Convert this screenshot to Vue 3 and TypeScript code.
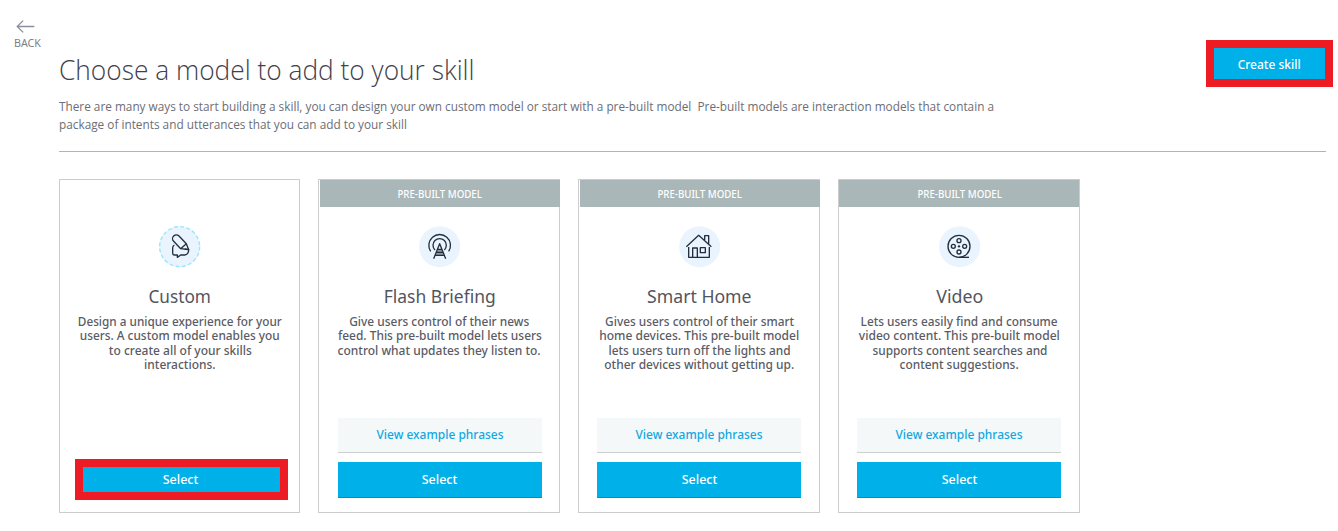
<script setup lang="ts">
import type { Directive } from 'vue'

interface Line {
  text: string
  width: number
}

interface Model {
  id: 'custom' | 'flash' | 'home' | 'video'
  title: Line
  lines: Line[]
  prebuilt: boolean
}

// Condenses a line of text so that it takes the given width.
const vFit: Directive<HTMLElement, number> = {
  mounted(el, binding) {
    const natural = el.getBoundingClientRect().width
    if (natural === 0) return
    el.style.transform = `scaleX(${(binding.value / natural).toFixed(5)})`
  },
}

const intro: Line[] = [
  {
    text: 'There are many ways to start building a skill, you can design your own custom model or start with a pre-built model\u00a0 Pre-built models are interaction models that contain a',
    width: 935,
  },
  { text: 'package of intents and utterances that you can add to your skill', width: 348 },
]

const models: Model[] = [
  {
    id: 'custom',
    title: { text: 'Custom', width: 62.5 },
    lines: [
      { text: 'Design a unique experience for your', width: 204 },
      { text: 'users. A custom model enables you', width: 200 },
      { text: 'to create all of your skills', width: 143 },
      { text: 'interactions.', width: 71.5 },
    ],
    prebuilt: false,
  },
  {
    id: 'flash',
    title: { text: 'Flash Briefing', width: 112 },
    lines: [
      { text: 'Give users control of their news', width: 180 },
      { text: 'feed. This pre-built model lets users', width: 204 },
      { text: 'control what updates they listen to.', width: 203 },
    ],
    prebuilt: true,
  },
  {
    id: 'home',
    title: { text: 'Smart Home', width: 104.5 },
    lines: [
      { text: 'Gives users control of their smart', width: 189 },
      { text: 'home devices. This pre-built model', width: 200 },
      { text: 'lets users turn off the lights and', width: 182 },
      { text: 'other devices without getting up.', width: 190 },
    ],
    prebuilt: true,
  },
  {
    id: 'video',
    title: { text: 'Video', width: 47 },
    lines: [
      { text: 'Lets users easily find and consume', width: 197 },
      { text: 'video content. This pre-built model', width: 201 },
      { text: 'supports content searches and', width: 175 },
      { text: 'content suggestions.', width: 119 },
    ],
    prebuilt: true,
  },
]
</script>

<template>
  <div class="page">
    <a class="back">
      <svg class="arrow" width="19" height="14" viewBox="0 0 19 14">
        <path d="M18.3 6.500H1.2M7.2 .6 1.2 6.500l6 5.9" />
      </svg>
      <span v-fit="27" class="fit start back-label">BACK</span>
    </a>

    <main class="content">
      <header class="top">
        <div class="heading">
          <h1><span v-fit="415.5" class="fit start">Choose a model to add to your skill</span></h1>
          <p class="intro">
            <span v-for="line in intro" :key="line.text" class="row">
              <span v-fit="line.width" class="fit start">{{ line.text }}</span>
            </span>
          </p>
        </div>
        <button class="create"><span v-fit="63" class="fit">Create skill</span></button>
      </header>

      <section class="cards">
        <article v-for="m in models" :key="m.id" class="card" :class="m.id">
          <div v-if="m.prebuilt" class="tag"><span v-fit="84.5" class="fit">PRE-BUILT MODEL</span></div>
          <div v-else class="tag-space"></div>

          <svg class="icon" width="42" height="42" viewBox="0 0 126 126">
            <circle class="disc" cx="62" cy="62" r="61.5" />
            <g transform="translate(-27 -33)">
              <g v-if="m.id === 'custom'">
                <circle class="dash" cx="89" cy="95" r="60" />
                <path d="M92 101 71 79A11 11 0 0 1 87 63L109 86 116 104ZM92 101 109 86" />
                <path d="M73 90Q68 93 68 98V115Q68 120 73 120H82V127L92 120H104Q116 118 116 104L104 102" />
              </g>
              <g v-else-if="m.id === 'flash'">
                <path d="M62 109A32.500 32.500 0 1 1 116 109" />
                <path d="M75 105A20 20 0 1 1 103 105" />
                <path class="shade" d="M83 104H95L101 121H77Z" />
                <path d="M71 131 89 86 107 131M83 103H95M80 112H98M76 121H102" />
              </g>
              <g v-else-if="m.id === 'home'">
                <path d="M49 95 86 61 124 95M104 75V62H116V86" />
                <path d="M56 96V127H118V96M68 127V99H82V127M91 98H106V113H91Z" />
              </g>
              <g v-else>
                <circle cx="87" cy="94" r="33" />
                <circle cx="87" cy="77" r="6" />
                <circle cx="87" cy="111" r="6" />
                <circle cx="70" cy="94" r="6" />
                <circle cx="104" cy="94" r="6" />
                <circle class="hub" cx="87" cy="94" r="3.500" />
                <path d="M87 127H117" />
              </g>
            </g>
          </svg>

          <h2><span v-fit="m.title.width" class="fit">{{ m.title.text }}</span></h2>
          <p class="text">
            <span v-for="line in m.lines" :key="line.text" class="row">
              <span v-fit="line.width" class="fit">{{ line.text }}</span>
            </span>
          </p>

          <div class="actions">
            <button v-if="m.prebuilt" class="view">
              <span v-fit="127" class="fit">View example phrases</span>
            </button>
            <button class="select"><span v-fit="35.5" class="fit">Select</span></button>
          </div>
        </article>
      </section>
    </main>
  </div>
</template>

<style>
body {
  margin: 0;
  background: #fff;
}
</style>

<style scoped>
.page {
  box-sizing: border-box;
  width: 1338px;
  height: 531px;
  display: flex;
  overflow: hidden;
  background: #fff;
  color: #53555e;
  font-family: 'Noto Sans', 'Open Sans', sans-serif;
}
.fit {
  flex: none;
  display: inline-block;
  white-space: nowrap;
}
.start {
  transform-origin: left center;
}
.back {
  width: 45px;
  padding: 20px 0 0 14px;
  display: flex;
  flex-direction: column;
  align-items: flex-start;
}
.arrow {
  margin-left: 2px;
  fill: none;
  stroke: #8b8e9c;
  stroke-width: 1.3;
}
.back-label {
  margin-top: 2px;
  font-size: 11px;
  line-height: 14px;
  color: #7c7f88;
}
.content {
  width: 1279px;
}
.top {
  box-sizing: border-box;
  width: 1267px;
  height: 152px;
  display: flex;
  justify-content: space-between;
  border-bottom: 1px solid #aab7b8;
}
.heading {
  width: 1000px;
  padding-top: 50px;
}
h1 {
  margin: 0;
  font: 300 27px/40px 'Open Sans', sans-serif;
  color: #3f414b;
}
.intro {
  margin: 7px 0 0;
  font: 400 13px/18px 'Open Sans', sans-serif;
  color: #6c6e76;
}
.row {
  display: flex;
  justify-content: center;
}
.intro .row {
  justify-content: flex-start;
}
button {
  display: flex;
  align-items: center;
  justify-content: center;
  box-sizing: border-box;
  padding: 0 0 2px;
  border: 0;
  color: #fff;
  font: 500 13px/18px 'Noto Sans', sans-serif;
}
.create {
  flex: none;
  width: 127px;
  height: 47px;
  margin: 40px -7px 0 0;
  padding: 0 1px 0 0;
  border: 8px solid #ed1c24;
  background: #00b0e8;
}
.cards {
  margin-top: 27px;
  display: flex;
  gap: 18px;
}
.card {
  box-sizing: border-box;
  width: 242px;
  height: 334px;
  border: 1px solid #ccc;
  display: flex;
  flex-direction: column;
  align-items: center;
}
.card.custom {
  width: 241px;
}
.tag {
  box-sizing: border-box;
  width: 240px;
  margin-right: -2px;
  height: 27px;
  padding: 1px 1px 0 0;
  background: #aab7b8;
  color: #fff;
  text-align: center;
  font-size: 10px;
  font-weight: 500;
  line-height: 27px;
}
.video .tag {
  margin-right: 0;
  padding: 1px 0 0 1px;
}
.tag-space {
  height: 27px;
}
.icon {
  flex: none;
  margin: 19px 0 0 1px;
  fill: none;
  stroke: #232f3e;
  stroke-width: 4;
  stroke-linejoin: round;
}
.disc {
  fill: #e9f4fe;
  stroke: none;
}
.dash {
  stroke: #98e6fa;
  stroke-dasharray: 11.7 7.150;
}
.shade {
  fill: #8d98a3;
  stroke: none;
}
.hub {
  fill: #232f3e;
  stroke: none;
}
h2 {
  margin: 16px 0 0 1px;
  font-size: 18px;
  line-height: 24px;
  font-weight: 400;
}
.text {
  margin: 6px 0 0 1px;
  font-size: 13px;
  line-height: 14.4px;
  font-weight: 500;
  color: #5a5c65;
}
.text .row {
  height: 14.4px;
}
.actions {
  width: 204px;
  margin: auto 0 14px;
  display: flex;
  flex-direction: column;
  gap: 9px;
}
.flash .actions {
  margin-left: 1px;
}
.view {
  height: 35px;
  border-bottom: 1px solid #ccd0d1;
  background: #f4f8f9;
  color: #11a8e0;
}
.select {
  height: 36px;
  border-bottom: 1px solid #0092c4;
  background: #00b0e8;
}
.custom .actions {
  width: 213px;
  margin: auto 0 12px 3px;
}
.custom .select {
  height: 41px;
  padding-right: 2px;
  border: 8px solid #ed1c24;
}
</style>
